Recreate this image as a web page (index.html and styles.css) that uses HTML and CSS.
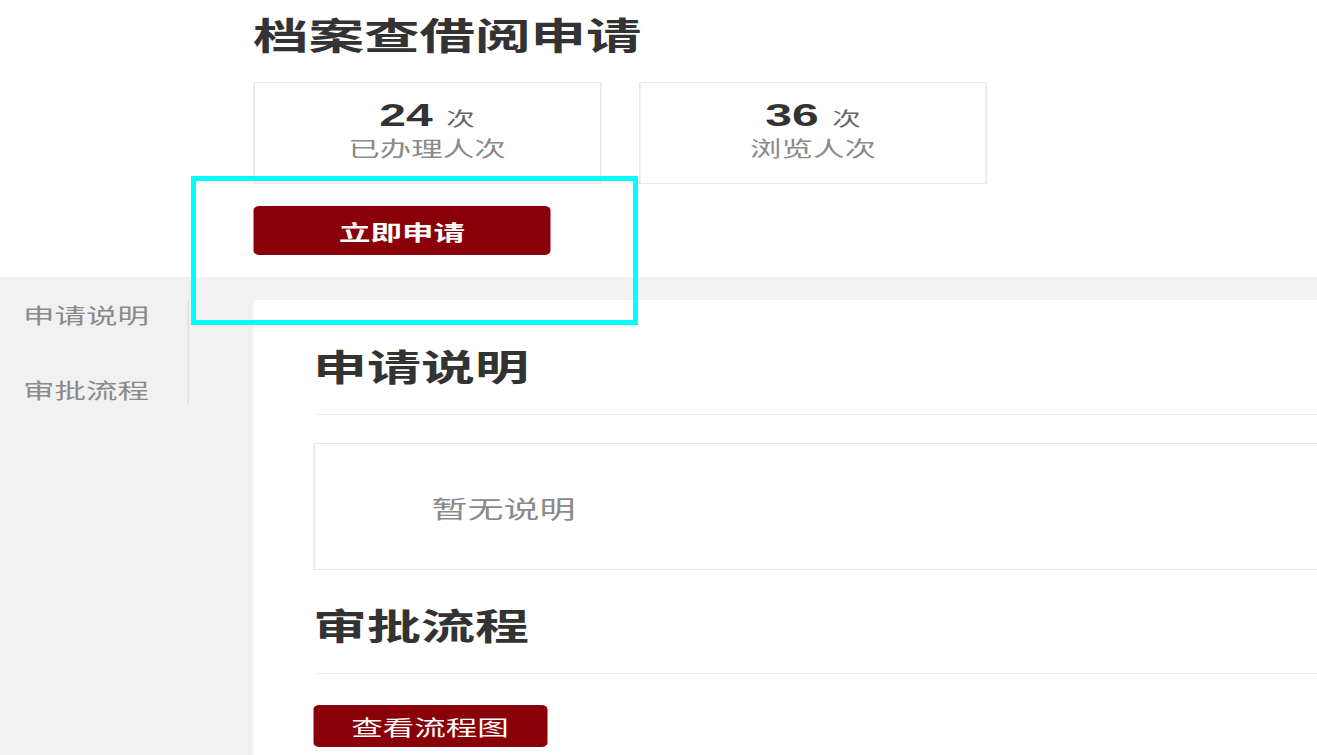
FILE: index.html
```html
<!DOCTYPE html>
<html lang="zh-CN">
<head>
<meta charset="utf-8">
<title>档案查借阅申请</title>
<link rel="stylesheet" href="styles.css">
</head>
<body>
<div class="page">
  <header class="intro">
    <h1 class="intro-title">档案查借阅申请</h1>
    <div class="stats">
      <div class="stat-card">
        <div class="stat-value"><span class="stat-num">24</span><span class="stat-unit">次</span></div>
        <div class="stat-label">已办理人次</div>
      </div>
      <div class="stat-card">
        <div class="stat-value"><span class="stat-num">36</span><span class="stat-unit">次</span></div>
        <div class="stat-label">浏览人次</div>
      </div>
    </div>
    <button class="btn btn-apply" type="button">立即申请</button>
  </header>
  <section class="content">
    <aside class="side">
      <nav class="side-nav">
        <a class="side-link">申请说明</a>
        <a class="side-link">审批流程</a>
      </nav>
    </aside>
    <main class="panel">
      <h2 class="panel-heading">申请说明</h2>
      <div class="desc-box">暂无说明</div>
      <h2 class="panel-heading panel-heading-next">审批流程</h2>
      <button class="btn btn-flow" type="button">查看流程图</button>
    </main>
  </section>
</div>
<div class="highlight"></div>
</body>
</html>
```
FILE: styles.css
```css
html, body {
  margin: 0;
  padding: 0;
  height: 755px;
  overflow: hidden;
  background: #ffffff;
}

body {
  font-family: "Noto Sans CJK SC", "Noto Sans", sans-serif;
  color: #333333;
  position: relative;
}

.page {
  width: 878px;
  transform: scaleX(1.5);
  transform-origin: 0 0;
}

.intro {
  padding: 12px 0 0 168.7px;
  height: 265px;
}

.intro-title {
  margin: 0;
  font-size: 37px;
  line-height: 44px;
  font-weight: 700;
  color: #333333;
}

.stats {
  display: flex;
  gap: 25.3px;
  margin-top: 26px;
}

.stat-card {
  box-sizing: border-box;
  width: 232px;
  height: 102px;
  border: 1px solid #e8e8e8;
  padding-top: 15px;
  text-align: center;
}

.stat-value {
  line-height: 34px;
  height: 34px;
}

.stat-num {
  font-family: "Liberation Sans", Arial, sans-serif;
  font-size: 32px;
  font-weight: 700;
  color: #333333;
}

.stat-unit {
  font-size: 19px;
  margin-left: 9px;
  color: #666666;
}

.stat-label {
  font-size: 21px;
  line-height: 30px;
  color: #8a8a8a;
}

.btn {
  display: flex;
  align-items: center;
  justify-content: center;
  border: none;
  border-radius: 4px;
  background: #8a0008;
  color: #ffffff;
  font-family: "Noto Sans CJK SC", sans-serif;
  padding: 0;
  cursor: pointer;
}

.btn-apply {
  margin-top: 22px;
  width: 198.7px;
  height: 49px;
  font-size: 21px;
  font-weight: 700;
}

.content {
  display: flex;
  background: #f1f1f1;
  padding-top: 23px;
  height: 455px;
}

.side {
  width: 168.7px;
  flex: none;
}

.side-nav {
  box-sizing: border-box;
  width: 126px;
  border-right: 1px solid #dedede;
  display: flex;
  flex-direction: column;
  gap: 47px;
  padding: 0 0 0 15.3px;
  height: 103px;
}

.side-link {
  font-size: 21px;
  line-height: 28px;
  color: #8a8a8a;
  white-space: nowrap;
}

.panel {
  flex: 1;
  background: #ffffff;
  padding: 43px 0 0 40px;
}

.panel-heading {
  margin: 0;
  font-size: 36px;
  line-height: 44px;
  font-weight: 700;
  color: #333333;
  padding-bottom: 27px;
  border-bottom: 1px solid #ececec;
}

.panel-heading-next {
  margin-top: 32px;
}

.desc-box {
  box-sizing: border-box;
  margin-top: 28px;
  height: 127px;
  border: 1px solid #e8e8e8;
  border-right: none;
  display: flex;
  align-items: center;
  padding: 2px 0 0 78px;
  font-size: 24px;
  color: #8a8a8a;
}

.btn-flow {
  margin-top: 31px;
  width: 156px;
  height: 42px;
  font-size: 21px;
  font-weight: 400;
}

.highlight {
  position: absolute;
  left: 191px;
  top: 176px;
  width: 447px;
  height: 149px;
  box-sizing: border-box;
  border: 5px solid #00ffff;
  pointer-events: none;
}
```
